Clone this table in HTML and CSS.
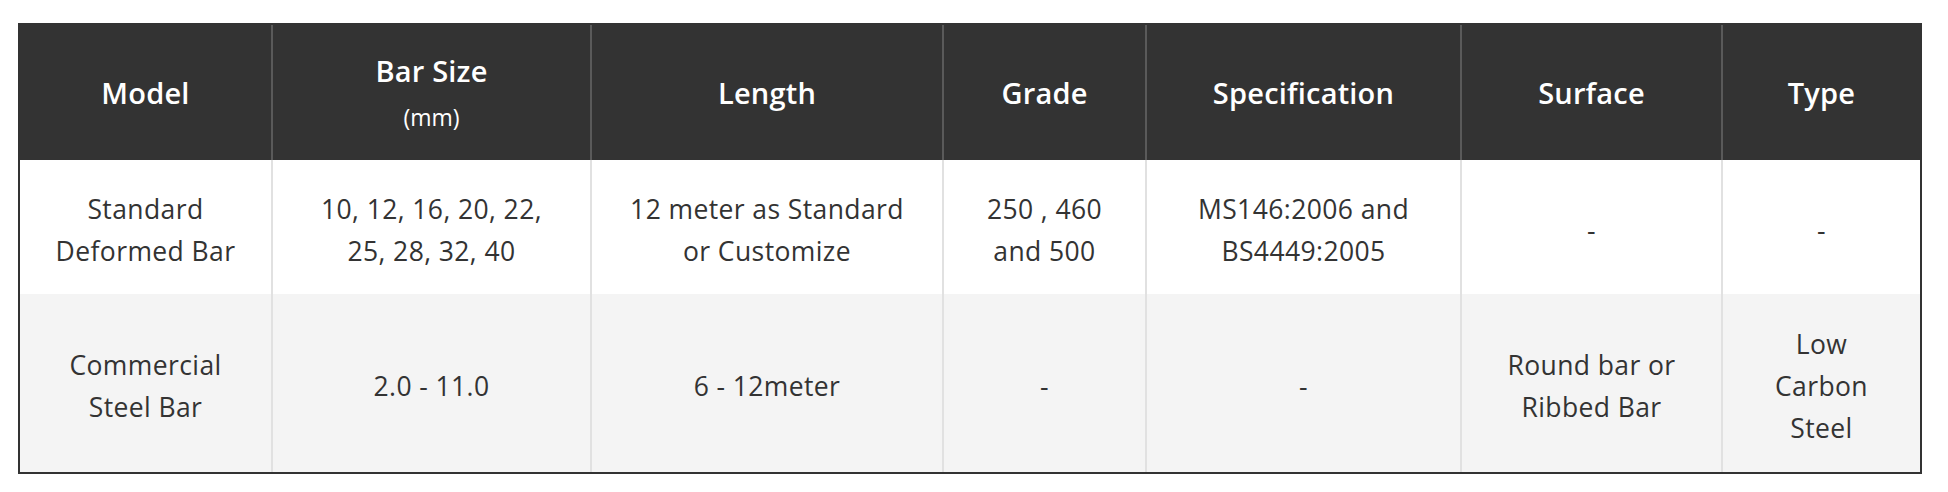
FILE: index.html
```html
<!DOCTYPE html>
<html>
<head>
<meta charset="utf-8">
<link rel="stylesheet" href="styles.css">
</head>
<body>
<div class="wrap">
<table class="spec">
  <colgroup>
    <col class="c1"><col class="c2"><col class="c3"><col class="c4"><col class="c5"><col class="c6"><col class="c7">
  </colgroup>
  <thead>
    <tr>
      <th>Model</th>
      <th>Bar Size<br><span class="unit">(mm)</span></th>
      <th>Length</th>
      <th>Grade</th>
      <th>Specification</th>
      <th>Surface</th>
      <th>Type</th>
    </tr>
  </thead>
  <tbody>
    <tr class="r1">
      <td>Standard<br>Deformed Bar</td>
      <td>10, 12, 16, 20, 22,<br>25, 28, 32, 40</td>
      <td>12 meter as Standard<br>or Customize</td>
      <td>250 , 460<br>and 500</td>
      <td>MS146:2006 and<br>BS4449:2005</td>
      <td>-</td>
      <td>-</td>
    </tr>
    <tr class="r2">
      <td>Commercial<br>Steel Bar</td>
      <td>2.0 - 11.0</td>
      <td>6 - 12meter</td>
      <td>-</td>
      <td>-</td>
      <td>Round bar or<br>Ribbed Bar</td>
      <td>Low<br>Carbon<br>Steel</td>
    </tr>
  </tbody>
</table>
</div>
</body>
</html>
```

FILE: styles.css
```css
html, body {
  margin: 0;
  padding: 0;
  background: #fff;
}
.wrap {
  padding: 23px 26px 0 18px;
}
.spec {
  width: 1904px;
  table-layout: fixed;
  border-collapse: separate;
  border-spacing: 0;
  border: 2px solid #333;
  font-family: "Open Sans", "Noto Sans", sans-serif;
  color: #333;
}
.c1 { width: 251px; }
.c2 { width: 319px; }
.c3 { width: 352px; }
.c4 { width: 203px; }
.c5 { width: 315px; }
.c6 { width: 261px; }
.c7 { width: 199px; }
.spec th, .spec td {
  box-sizing: border-box;
  text-align: center;
  vertical-align: middle;
  padding: 0 10px;
  white-space: nowrap;
}
.spec th + th { border-left: 2px solid #5a5a5a; }
.spec td + td { border-left: 2px solid #e1e1e1; }
.spec thead tr { height: 135px; }
.spec th {
  background: #333;
  color: #fff;
  font-weight: 600;
  font-size: 29px;
  line-height: 44px;
  letter-spacing: 0.2px;
}
.spec .unit {
  font-weight: 400;
  font-size: 23px;
  letter-spacing: 0;
  line-height: 40px;
}
.spec td {
  font-size: 26.5px;
  line-height: 42px;
  font-weight: 400;
  letter-spacing: 0.4px;
  padding-top: 6px;
}
.spec .r1 { height: 134px; background: #fff; }
.spec .r2 { height: 178px; background: #f4f4f4; }
```
